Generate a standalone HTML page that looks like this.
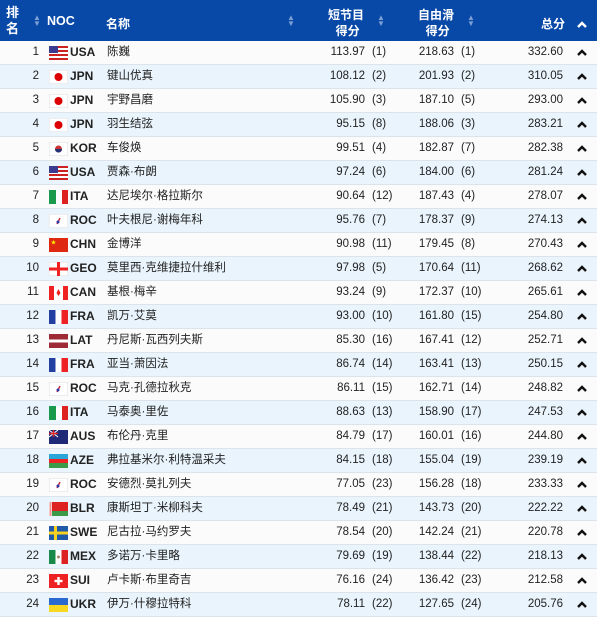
<!DOCTYPE html>
<html><head><meta charset="utf-8"><style>
body{margin:0;width:600px;height:617px;background:#fff;font-family:"Liberation Sans","Noto Sans CJK SC",sans-serif;overflow:hidden;position:relative}
.hd{position:absolute;left:0;top:0;width:597px;height:41px;background:#0849a8;color:#fff;font-weight:bold;font-size:12px}
.hd div{position:absolute}
.r{position:absolute;left:0;width:597px;height:23px;border-bottom:1px solid #dde3ea;font-size:11.5px;color:#222}
.r.a{background:#fbfbfb}.r.b{background:#e9f4fc}
.r div{position:absolute;top:0;line-height:23px}
.rk{right:558px;text-align:right}
.fl{left:49px;top:5px!important;width:19px;height:14px}
.fl svg{display:block;width:19px;height:14px}
.noc{left:70px;font-weight:bold;font-size:12px}
.nm{left:107px}
.s1{right:232px}.p1{left:372px}
.s2{right:143px}.p2{left:461px}
.tot{right:34px}
.car{left:577px;top:8px!important}
.car svg{display:block}
.sort{color:#7e9fd4;font-size:8px;line-height:6px}
</style></head><body>
<div class="hd">
<div style="left:6px;top:5px;line-height:16px;font-size:13px">排<br>名</div>
<div class="sort" style="left:33px;top:15px">▲<br>▼</div>
<div style="left:47px;top:14px;font-size:12.5px">NOC</div>
<div style="left:106px;top:15px">名称</div>
<div class="sort" style="left:287px;top:15px">▲<br>▼</div>
<div style="left:328px;top:7px;line-height:16px;text-align:center">短节目<br>&nbsp;得分</div>
<div class="sort" style="left:377px;top:15px">▲<br>▼</div>
<div style="left:418px;top:7px;line-height:16px;text-align:center">自由滑<br>&nbsp;得分</div>
<div class="sort" style="left:467px;top:15px">▲<br>▼</div>
<div style="left:541px;top:15px">总分</div>
<div style="left:577px;top:17px"><svg width="10" height="7" viewBox="0 0 10 7"><path d="M1 6L5 2L9 6" stroke="#fff" stroke-width="2.4" fill="none"/></svg></div>
</div>
<div id="rows"></div>
<script>
var F={
USA:'<rect width="19" height="14" fill="#fff"/><g fill="#c22"><rect y="0" width="19" height="2"/><rect y="4" width="19" height="2"/><rect y="8" width="19" height="2"/><rect y="12" width="19" height="2"/></g><rect width="9" height="7" fill="#3b3b8f"/>',
JPN:'<rect width="19" height="14" fill="#fff" stroke="#ddd"/><circle cx="9.5" cy="7" r="4" fill="#d00"/>',
KOR:'<rect width="19" height="14" fill="#fff" stroke="#ddd"/><circle cx="9.5" cy="7" r="3.5" fill="#c33"/><path d="M6 7a3.5 3.5 0 0 0 7 0z" fill="#237"/>',
ITA:'<rect width="7" height="14" fill="#1a9a4a"/><rect x="7" width="6" height="14" fill="#fff"/><rect x="13" width="6" height="14" fill="#d22"/>',
ROC:'<rect width="19" height="14" fill="#fff" stroke="#ddd"/><path d="M8 10l3-6" stroke="#c33" stroke-width="1.5"/><circle cx="9" cy="8" r="1.5" fill="#33a"/>',
CHN:'<rect width="19" height="14" fill="#de2910"/><text x="2" y="6" font-size="5" fill="#ff0">★</text>',
GEO:'<rect width="19" height="14" fill="#fff" stroke="#ddd"/><rect x="8" width="3" height="14" fill="#e22"/><rect y="5.5" width="19" height="3" fill="#e22"/>',
CAN:'<rect width="19" height="14" fill="#fff"/><rect width="5" height="14" fill="#e22"/><rect x="14" width="5" height="14" fill="#e22"/><path d="M9.5 3l2 4-2 3-2-3z" fill="#e22"/>',
FRA:'<rect width="6.5" height="14" fill="#2340a0"/><rect x="6.5" width="6" height="14" fill="#fff"/><rect x="12.5" width="6.5" height="14" fill="#e22"/>',
LAT:'<rect width="19" height="14" fill="#9e2a35"/><rect y="5.5" width="19" height="3" fill="#fff"/>',
AUS:'<rect width="19" height="14" fill="#1e2a78"/><path d="M0 0l9 7M9 0L0 7" stroke="#fff" stroke-width="1"/><path d="M4.5 0v7M0 3.5h9" stroke="#d22" stroke-width="1.4"/>',
AZE:'<rect width="19" height="5" fill="#2aa5d8"/><rect y="5" width="19" height="4" fill="#e22"/><rect y="9" width="19" height="5" fill="#3a9a4a"/>',
BLR:'<rect width="19" height="9" fill="#d22"/><rect y="9" width="19" height="5" fill="#3a9a4a"/><rect width="3" height="14" fill="#fff"/><rect x="0.5" width="2" height="14" fill="#d22" opacity=".5"/>',
SWE:'<rect width="19" height="14" fill="#1e5aa8"/><rect x="5" width="3" height="14" fill="#f8d020"/><rect y="5.5" width="19" height="3" fill="#f8d020"/>',
MEX:'<rect width="6.5" height="14" fill="#1a8a4a"/><rect x="6.5" width="6" height="14" fill="#fff"/><rect x="12.5" width="6.5" height="14" fill="#d22"/><circle cx="9.5" cy="7" r="1.5" fill="#a86"/>',
SUI:'<rect width="19" height="14" fill="#e22"/><rect x="8.3" y="3" width="2.4" height="8" fill="#fff"/><rect x="5.5" y="5.8" width="8" height="2.4" fill="#fff"/>',
UKR:'<rect width="19" height="7" fill="#2a6ad0"/><rect y="7" width="19" height="7" fill="#f8d820"/>'};
var D=[
["USA","陈巍","113.97","(1)","218.63","(1)","332.60"],
["JPN","键山优真","108.12","(2)","201.93","(2)","310.05"],
["JPN","宇野昌磨","105.90","(3)","187.10","(5)","293.00"],
["JPN","羽生结弦","95.15","(8)","188.06","(3)","283.21"],
["KOR","车俊焕","99.51","(4)","182.87","(7)","282.38"],
["USA","贾森·布朗","97.24","(6)","184.00","(6)","281.24"],
["ITA","达尼埃尔·格拉斯尔","90.64","(12)","187.43","(4)","278.07"],
["ROC","叶夫根尼·谢梅年科","95.76","(7)","178.37","(9)","274.13"],
["CHN","金博洋","90.98","(11)","179.45","(8)","270.43"],
["GEO","莫里西·克维捷拉什维利","97.98","(5)","170.64","(11)","268.62"],
["CAN","基根·梅辛","93.24","(9)","172.37","(10)","265.61"],
["FRA","凯万·艾莫","93.00","(10)","161.80","(15)","254.80"],
["LAT","丹尼斯·瓦西列夫斯","85.30","(16)","167.41","(12)","252.71"],
["FRA","亚当·萧因法","86.74","(14)","163.41","(13)","250.15"],
["ROC","马克·孔德拉秋克","86.11","(15)","162.71","(14)","248.82"],
["ITA","马泰奥·里佐","88.63","(13)","158.90","(17)","247.53"],
["AUS","布伦丹·克里","84.79","(17)","160.01","(16)","244.80"],
["AZE","弗拉基米尔·利特温采夫","84.15","(18)","155.04","(19)","239.19"],
["ROC","安德烈·莫扎列夫","77.05","(23)","156.28","(18)","233.33"],
["BLR","康斯坦丁·米柳科夫","78.49","(21)","143.73","(20)","222.22"],
["SWE","尼古拉·马约罗夫","78.54","(20)","142.24","(21)","220.78"],
["MEX","多诺万·卡里略","79.69","(19)","138.44","(22)","218.13"],
["SUI","卢卡斯·布里奇吉","76.16","(24)","136.42","(23)","212.58"],
["UKR","伊万·什穆拉特科","78.11","(22)","127.65","(24)","205.76"]];
var h="";
D.forEach(function(d,i){
h+='<div class="r '+(i%2?'b':'a')+'" style="top:'+(41+i*24)+'px">'+
'<div class="rk">'+(i+1)+'</div><div class="fl"><svg viewBox="0 0 19 14">'+F[d[0]]+'</svg></div>'+
'<div class="noc">'+d[0]+'</div><div class="nm">'+d[1]+'</div>'+
'<div class="s1">'+d[2]+'</div><div class="p1">'+d[3]+'</div>'+
'<div class="s2">'+d[4]+'</div><div class="p2">'+d[5]+'</div>'+
'<div class="tot">'+d[6]+'</div><div class="car"><svg width="10" height="7" viewBox="0 0 10 7"><path d="M1 6L5 2L9 6" stroke="#111" stroke-width="2.4" fill="none"/></svg></div></div>';});
document.getElementById("rows").innerHTML=h;
</script>
</body></html>
